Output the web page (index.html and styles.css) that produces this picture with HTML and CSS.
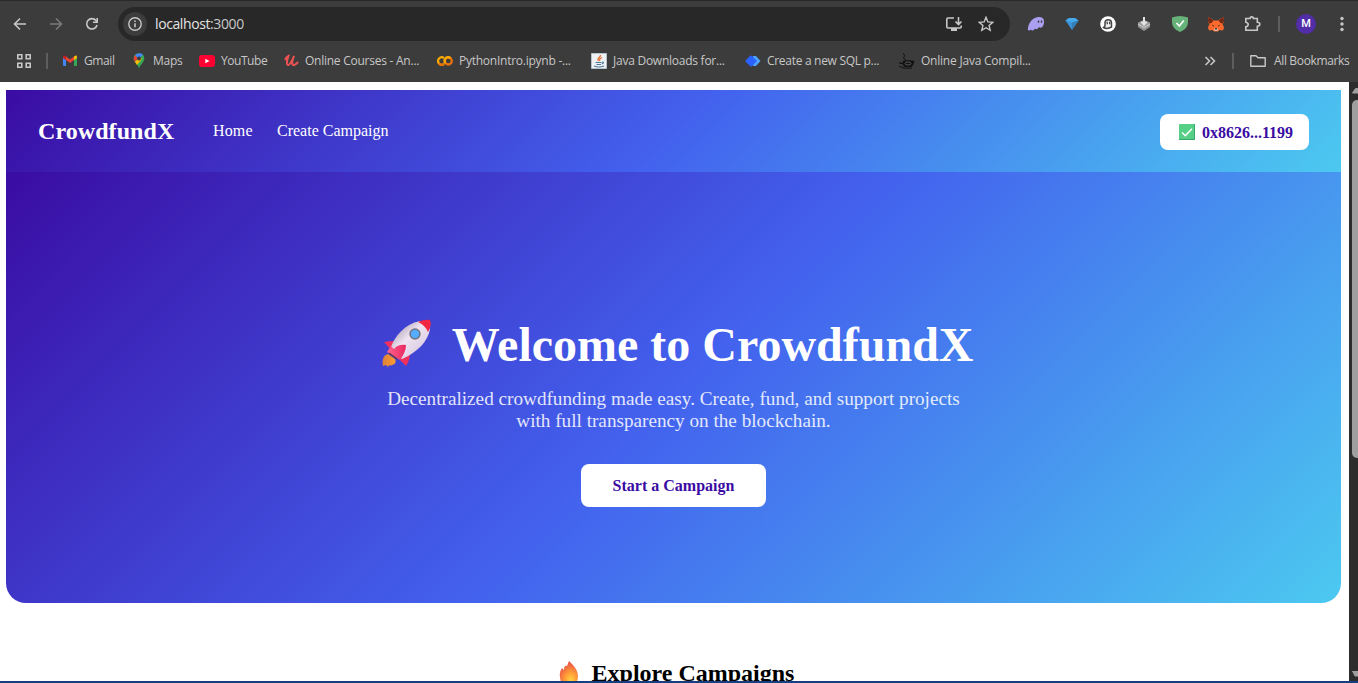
FILE: index.html
```html
<!DOCTYPE html>
<html lang="en">
<head>
<meta charset="utf-8">
<title>CrowdfundX</title>
<link rel="stylesheet" href="styles.css">
</head>
<body>
<header class="chrome">
  <div class="toolbar">
    <svg class="back" width="16" height="16" viewBox="0 0 16 16"><path d="M14 8H3M8 2.500L2.500 8L8 13.500" class="line"/></svg>
    <svg class="forward" width="16" height="16" viewBox="0 0 16 16"><path d="M2 8h11M8 2.500L13.500 8L8 13.500" class="line"/></svg>
    <svg class="reload" width="16" height="16" viewBox="0 0 16 16"><path d="M13 9A5.200 5.200 0 1 1 12 4.600L13 5.600" class="line"/><path d="M14 2v5H9V5.500h3.400V2z" fill="#c7c7c7"/></svg>
    <div class="omnibox">
      <span class="info"><svg width="16" height="16" viewBox="0 0 16 16"><circle cx="8" cy="8" r="6.200" class="line thin"/><path d="M8 7.200v4M8 4.500v1.500" class="line"/></svg></span>
      <span class="url">localhost<span class="port">:3000</span></span>
      <svg class="install" width="18" height="16" viewBox="0 0 18 16"><path d="M9 2H3Q1.800 2 1.800 3V11Q1.800 12 3 12H15Q16.200 12 16.200 11V9.500M13.500 1V8M10.500 5.500L13.500 8.500L16.500 5.500" class="line"/><path d="M6 12h6v3H6z" fill="#c7c7c7"/></svg>
      <svg class="star" width="16" height="16" viewBox="0 0 16 16"><path d="M8 1.300L9.900 5.900L14.800 6.300L11.100 9.500L12.200 14.300L8 11.700L3.800 14.300L4.900 9.500L1.200 6.300L6.100 5.900Z" class="line thin"/></svg>
    </div>
    <div class="extensions">
      <svg width="18" height="16" viewBox="0 0 18 16"><path d="M1 12C2 6 6 1 12 1C17.500 1 18 6 16 10C15 12 13 12 12 11C11 13 9 14 8 12.500C6.500 15 4.500 15 4 13.500C3 15 0 15 1 12Z" fill="#ab9ff2"/><path d="M11.500 4.500v2.200M14.500 4.500v2.200" stroke="#3c3c3c" stroke-width="1.400"/></svg>
      <svg width="18" height="16" viewBox="0 0 18 16"><path d="M2.500 4.500L6 2H12L15.500 4.500L9 14Z" fill="#3a92d9"/><path d="M2.500 4.500L6 2H12L15.500 4.500L9 6.500Z" fill="#45a9ee"/><path d="M9 6.500V14L15.500 4.500Z" fill="#347fb5"/></svg>
      <svg width="18" height="16" viewBox="0 0 18 16"><circle cx="9" cy="8" r="7.800" fill="#fff"/><path d="M4.500 11.500L6 10V6.500Q6 3.800 9.300 3.800Q12.500 3.800 12.500 7V11Q8 13.500 4.500 11.500Z" fill="#eee" stroke="#444" stroke-width="1.500"/><path d="M8.200 5.800v2.500M10.700 5.800v2.500" stroke="#333" stroke-width="1.200"/></svg>
      <svg width="18" height="16" viewBox="0 0 18 16"><path d="M3 6.500L9 4L15 6.500V11L9 15L3 11Z" fill="#969696"/><path d="M3 8L9 11.500L15 8" fill="none" stroke="#c4c4c4" stroke-width="1.300"/><path d="M9 1V8M6.300 5.700L9 8.500L11.700 5.700" fill="none" stroke="#e2e2e2" stroke-width="2"/></svg>
      <svg width="18" height="16" viewBox="0 0 18 16"><path d="M1 1.500Q9-1.500 17 1.500V6Q17 13 9 16Q1 13 1 6Z" fill="#67b279"/><path d="M5.500 7L8.300 10L12.800 4.500" fill="none" stroke="#fff" stroke-width="1.600"/></svg>
      <svg width="18" height="16" viewBox="0 0 18 16"><path d="M1.500 1L7 4.500H11L16.500 1L17 6L15.500 8L17 11.500L16 14.500L12.500 14L11 15.500H7L5.500 14L2 14.500L1 11.500L2.500 8L1 6Z" fill="#fb6a2c"/><path d="M1.500 1L6.500 4.500L4.500 7L2 7.500L1 5ZM16.500 1L11.500 4.500L13.500 7L16 7.500L17 5Z" fill="#6e2a17"/><path d="M5.300 9.300l1.700.8M12.700 9.300l-1.700.8" stroke="#4a2a20" stroke-width="1"/><path d="M7 13L7.800 12.200H10.200L11 13L10.500 15H7.500Z" fill="#d9c4b8"/><path d="M8 12.800h2" stroke="#222" stroke-width="1.200"/></svg>
      <svg width="18" height="16" viewBox="0 0 18 16"><path d="M2.800 2.500H7Q7 .900 8.700 .900Q10.400 .900 10.400 2.500H14.300V6.300Q16.800 6.500 16.800 8.200Q16.800 10 14.300 10.200V14.300H2.800V10.800Q5.200 10.300 5.200 8.500Q5.200 6.700 2.800 6.200Z" class="line"/></svg>
    </div>
    <span class="separator"></span>
    <span class="avatar">M</span>
    <svg class="menu" width="4" height="16" viewBox="0 0 4 16" fill="#c7c7c7"><circle cx="2" cy="2.500" r="1.700"/><circle cx="2" cy="8" r="1.700"/><circle cx="2" cy="13.500" r="1.700"/></svg>
  </div>
  <nav class="bookmarks">
    <svg class="apps" width="16" height="16" viewBox="0 0 16 16"><path d="M1.800 1.800h4v4h-4zM10.200 1.800h4v4h-4zM1.800 10.200h4v4h-4zM10.200 10.200h4v4h-4z" class="line"/></svg>
    <span class="separator"></span>
    <a class="bookmark gmail"><svg width="16" height="16" viewBox="0 0 16 16"><path d="M1 4L4 6.500V13H2Q1 13 1 12Z" fill="#4285f4"/><path d="M12 6.500L15 4V12Q15 13 14 13H12Z" fill="#34a853"/><path d="M4 7V3.500L8 6.500L12 3.500V7L8 10Z" fill="#ea4335"/><path d="M1 5V4Q1 2 3 2.800L4 3.500V7.200Z" fill="#c5221f"/><path d="M12 7.200V3.500L13 2.800Q15 2 15 4V5Z" fill="#fbbc04"/></svg><span>Gmail</span></a>
    <a class="bookmark maps"><svg width="14" height="16" viewBox="0 0 14 16"><path d="M6 16C6 12 .700 9.500 .700 5.500Q.700 .700 6 .300Q11.300 .700 11.300 5.500C11.300 9.500 6.500 12 6 16Z" fill="#34a853"/><path d="M2 2.500L6 6L10 1.800Q8 0 5 .400Q3 1 2 2.500" fill="#4285f4"/><path d="M2 2.300L5 5.500L2 9Q-.500 5.500 2 2.300" fill="#ea4335"/><path d="M2 9L7 4L9 6L4 12Z" fill="#fbbc04"/><circle cx="6" cy="5.500" r="2" fill="#3c3c3c"/></svg><span>Maps</span></a>
    <a class="bookmark youtube"><svg width="16" height="16" viewBox="0 0 16 16"><rect y="2" width="16" height="12" rx="3" fill="#ff0033"/><path d="M6.300 5.800V10.200L10.500 8Z" fill="#fff"/></svg><span>YouTube</span></a>
    <a class="bookmark udemy"><svg width="16" height="16" viewBox="0 0 16 16"><path d="M1 7Q2 4 4.500 3Q2.500 8 3 11Q4 13.500 6.500 10Q8.500 7 10 3Q7.500 8.500 8.500 11.500Q10 13.500 14 9" fill="none" stroke="#ec5252" stroke-width="2"/></svg><span>Online Courses - An...</span></a>
    <a class="bookmark colab"><svg width="16" height="16" viewBox="0 0 16 16"><path d="M7 5A3.700 3.700 0 1 0 7 11" fill="none" stroke="#f9ab00" stroke-width="2.300"/><path d="M2 10.500A3.700 3.700 0 0 0 7 11" fill="none" stroke="#e8710a" stroke-width="2.300"/><circle cx="11.300" cy="8" r="3.500" fill="none" stroke="#e8710a" stroke-width="2.300"/><path d="M8.500 10.300A3.500 3.500 0 0 1 13.600 5.300" fill="none" stroke="#f9ab00" stroke-width="2.300"/></svg><span>PythonIntro.ipynb -...</span></a>
    <a class="bookmark java"><svg width="16" height="16" viewBox="0 0 16 16"><path fill="#edf1f4" stroke="#b6c2cc" d="M.500.500h15v15H.500z"/><path d="M9.500 2C10 4.500 5 5 7.500 8M11 4.500Q7.500 6 9 8" fill="none" stroke="#e36b2c" stroke-width="1.200"/><path d="M4.500 9.500H10.500M5.500 11.500H10M3 13Q8 15 13 13M11 9Q14 9 11 11" fill="none" stroke="#52799a" stroke-width="1.200"/></svg><span>Java Downloads for...</span></a>
    <a class="bookmark sql"><svg width="16" height="16" viewBox="0 0 16 16"><path d="M8 3H11L15.500 8L11 13H8Z" fill="#4da3ff"/><path d="M1 7L5 3Q6 2 7 3L12 8L7 13Q6 14 5 13L1 9Q0 8 1 7" fill="#2962ff"/></svg><span>Create a new SQL p...</span></a>
    <a class="bookmark cup"><svg width="16" height="16" viewBox="0 0 16 16"><path d="M4 0Q6.500 2 5 4Q3.500 6 7 7" fill="none" stroke="#151515"/><path d="M3.500 8Q9 6.500 15.500 8Q15 12 12 14H6Q4 13 3.500 11Q0 11 0 9.500L1 9Q2 10 4 10Z" fill="#111"/><ellipse cx="9" cy="10.500" rx="3" ry="1.500" fill="none" stroke="#777" stroke-width=".7"/><path d="M0 13Q4 16 13 15" fill="none" stroke="#111"/></svg><span>Online Java Compil...</span></a>
    <svg class="overflow" width="12" height="12" viewBox="0 0 12 12"><path d="M1.500 2L5.500 6L1.500 10M6.500 2L10.500 6L6.500 10" class="line"/></svg>
    <span class="separator"></span>
    <a class="bookmark all"><svg width="16" height="16" viewBox="0 0 16 16"><path d="M.800 2.800H6L8 4.700H15.200V13.200H.800Z" class="line thin" stroke-linejoin="round"/></svg><span>All Bookmarks</span></a>
  </nav>
</header>
<div class="viewport">
  <main class="page">
    <nav class="site-nav">
      <span class="brand">CrowdfundX</span>
      <a class="home">Home</a>
      <a class="create">Create Campaign</a>
      <button class="wallet"><svg width="16" height="16" viewBox="0 0 16 16"><rect width="16" height="16" rx="1" fill="#56cf87"/><path d="M0 15H15V0H16V16H0Z" fill="#36a76b"/><path d="M3 8.500L6.300 11.700L13 4.700" fill="none" stroke="#fff" stroke-width="1.600"/></svg><span>0x8626...1199</span></button>
    </nav>
    <section class="hero">
      <h1>
        <svg width="50" height="48" viewBox="0 0 50 48">
          <defs>
            <linearGradient id="body" x1="0" y1="0" x2="1" y2="1"><stop offset=".2" stop-color="#b9adbf"/><stop offset=".45" stop-color="#eee4f2"/><stop offset="1" stop-color="#d0bcd7"/></linearGradient>
            <linearGradient id="fin"><stop stop-color="#ff6590"/><stop offset="1" stop-color="#ea2760"/></linearGradient>
            <linearGradient id="flame"><stop stop-color="#d8823c"/><stop offset="1" stop-color="#ff9b2f"/></linearGradient>
          </defs>
          <path d="M1 47Q-1 37 6 35L13 40Q15 45 10 46Q8 47 7 46L6 48L4 46Z" fill="url(#flame)"/>
          <path d="M13 22Q7 22 2 23L9 31ZM28 30Q29 40 24 47L17 40Z" fill="#f0315f"/>
          <path d="M8 31C12 17 23 5 38 2L48 10C46 22 36 33 20 40Z" fill="url(#body)"/>
          <path d="M36 3Q43 0 48 1Q50 6 46 13Q43 6 36 3Z" fill="#f32644"/>
          <path d="M9 27L5 33L18 41Q24 33 24 26Q16 25 12 30Z" fill="url(#fin)"/>
          <path d="M7 34L15 40" stroke="#67364d" stroke-width="1.500"/>
          <circle cx="33" cy="15" r="5.700" fill="#72737f"/><circle cx="33" cy="15" r="4.200" fill="#55adff"/>
        </svg>
        <span>Welcome to CrowdfundX</span>
      </h1>
      <p>Decentralized crowdfunding made easy. Create, fund, and support projects<br>with full transparency on the blockchain.</p>
      <button class="start">Start a Campaign</button>
    </section>
    <section class="explore">
      <h2><svg width="20" height="24" viewBox="0 0 20 24"><defs><radialGradient id="fire" cx=".6" cy=".8" r=".75"><stop stop-color="#ffd340"/><stop offset=".45" stop-color="#ff9a37"/><stop offset="1" stop-color="#e95348"/></radialGradient></defs><path d="M10 0Q19 8 19 15Q19 24 10 24Q1 24 1 16Q0 11 3 7L5 9Q5 4 8 5Z" fill="url(#fire)"/></svg><span>Explore Campaigns</span></h2>
    </section>
  </main>
  <aside class="scrollbar">
    <svg width="9" height="10" viewBox="0 0 9 10"><path d="M3.500 7L6.500 2.500H9V7Z" fill="#9f9f9f" stroke="#9f9f9f" stroke-linejoin="round"/></svg>
    <span class="thumb"></span>
    <svg class="down" width="9" height="10" viewBox="0 0 9 10"><path d="M3.500 0H9V5H6Z" fill="#9f9f9f" stroke="#9f9f9f" stroke-linejoin="round"/></svg>
  </aside>
</div>
<footer class="window-edge"></footer>
</body>
</html>
```
FILE: styles.css
```css
* { box-sizing: border-box; }
body { margin: 0; width: 1358px; height: 683px; overflow: hidden; display: flex; flex-direction: column; background: #fff; font-family: "Liberation Serif", serif; }
svg { display: block; flex: none; }
.line { fill: none; stroke: #c7c7c7; stroke-width: 1.6; }
.thin { stroke-width: 1.4; }
.chrome { height: 82px; flex: none; background: #3c3c3c; border-top: 1px solid #292929; color: #c7c7c7; font-family: "Open Sans", "Noto Sans", sans-serif; }
.toolbar { height: 46px; display: flex; align-items: center; padding-left: 12px; }
.forward { margin-left: 20px; opacity: .45; }
.reload { margin-left: 20px; }
.omnibox { width: 892px; height: 34px; margin-left: 18px; border-radius: 17px; background: #282828; display: flex; align-items: center; padding: 0 16px 0 5px; }
.info { width: 24px; height: 24px; border-radius: 50%; background: #3c3c3c; display: flex; align-items: center; justify-content: center; }
.url { margin-left: 8px; padding-bottom: 2px; color: #e3e3e3; font-size: 14px; letter-spacing: -.4px; }
.port { color: #c7c7c7; }
.install { margin-left: auto; }
.star { margin-left: 15px; }
.extensions { display: flex; gap: 18px; margin-left: 17px; }
.separator { width: 2px; height: 16px; background: #5e5e5e; flex: none; }
.toolbar > .separator { margin-left: 17px; }
.avatar { width: 20px; height: 20px; margin-left: 16px; border-radius: 50%; background: #512da8; color: #fff; font: 500 11px/20px Roboto, sans-serif; text-align: center; }
.menu { margin-left: 24px; }
.bookmarks { height: 28px; display: flex; align-items: center; padding-left: 16px; }
.bookmarks > .separator { margin-left: 14px; }
.bookmark { display: flex; align-items: center; flex: none; gap: 6px; font-size: 12px; line-height: 18px; white-space: nowrap; letter-spacing: -.25px; }
.gmail { width: 71px; margin-left: 14px; letter-spacing: -.4px; }
.maps { width: 66px; }
.youtube { width: 85px; letter-spacing: -.45px; }
.udemy { width: 153px; gap: 5px; }
.colab { width: 154px; }
.java { width: 154px; }
.sql { width: 154px; letter-spacing: -.3px; }
.cup { width: 132px; letter-spacing: -.22px; }
.overflow { margin-left: 173px; }
.bookmarks > .overflow + .separator { margin-left: 16px; }
.all { margin-left: 16px; gap: 8px; letter-spacing: -.35px; }
.viewport { height: 599px; display: flex; }
.page { width: 1349px; padding: 8px 8px 0 6px; overflow: hidden; }
.site-nav { height: 82px; display: flex; align-items: center; padding: 0 32px; color: #fff; font-size: 16px; background: linear-gradient(135deg, #3a0ca3, #4361ee, #4cc9f0); }
.brand { width: 175px; font-size: 24px; font-weight: bold; letter-spacing: .07px; }
.home { width: 40px; letter-spacing: .15px; }
.create { margin-left: 24px; }
button { border: 0; border-radius: 8px; background: #fff; color: #3a0ca3; font: bold 16px "Liberation Serif", serif; }
.wallet { width: 149px; height: 36px; margin-left: auto; margin-top: 2px; padding: 1px 16px 0 19px; display: flex; align-items: center; justify-content: space-between; }
.wallet svg { margin-top: -1px; }
.hero { height: 431px; padding-top: 145px; border-radius: 0 0 20px 20px; background: linear-gradient(135deg, #3a0ca3, #4361ee, #4cc9f0); display: flex; flex-direction: column; align-items: center; color: #fff; }
h1 { margin: 0 0 0 8px; height: 55px; width: 592px; display: flex; justify-content: space-between; align-items: center; font-size: 48px; line-height: 55px; white-space: nowrap; }
h1 svg { margin-top: -3px; }
.hero p { margin: 16px 0 0; font-size: 19.2px; line-height: 22px; text-align: center; opacity: .85; white-space: nowrap; }
.start { width: 185px; height: 43px; margin-top: 32px; }
.explore { padding-top: 56px; }
h2 { margin: 0; display: flex; justify-content: center; gap: 13px; align-items: center; font-size: 24px; line-height: 28px; padding-left: 6px; }
.scrollbar { width: 9px; background: #2c2c2c; display: flex; flex-direction: column; padding-top: 4px; }
.thumb { width: 6px; height: 358px; margin: 4px 0 0 3px; border-radius: 5px 0 0 5px; background: #9f9f9f; }
.down { margin-top: auto; }
.window-edge { height: 2px; background: #173f7f; }
```
